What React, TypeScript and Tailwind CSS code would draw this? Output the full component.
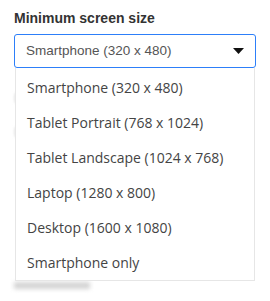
import React from "react";

const items = [
  "Smartphone (320 x 480)",
  "Tablet Portrait (768 x 1024)",
  "Tablet Landscape (1024 x 768)",
  "Laptop (1280 x 800)",
  "Desktop (1600 x 1080)",
  "Smartphone only",
];

export default function App() {
  return (
    <div className="w-[270px] h-[301px] bg-white relative overflow-hidden">
      <div className="pl-[14px] pr-[14px] pt-[10px]">
        <div
          className="text-[14px] leading-[16px] font-bold text-[#333] h-[24px]"
          style={{ fontFamily: "'Liberation Sans', Arial, sans-serif" }}
        >
          Minimum screen size
        </div>
        <div className="relative">
          <div className="h-[34px] border border-[#2d7ff9] rounded-[3px] flex items-center pl-[11px] pr-[11px] justify-between">
            <span
              className="text-[13.5px] text-[#555]"
              style={{ fontFamily: "'Liberation Sans', Arial, sans-serif" }}
            >
              Smartphone (320 x 480)
            </span>
            <svg width="11" height="6" viewBox="0 0 11 6">
              <path d="M0 0 L11 0 L5.5 6 Z" fill="#111" />
            </svg>
          </div>
          <div className="mt-[24px] h-[180px] flex flex-col gap-[22px]">
            <div className="h-[12px] w-[30px] bg-[#e8e8e8] rounded-sm blur-[1px]" />
            <div className="h-[12px] w-[30px] bg-[#e8e8e8] rounded-sm blur-[1px]" />
          </div>
          <div className="mt-[10px] h-[7px] w-[76px] bg-[#d4d4d4] blur-[2px]" />
          <div className="absolute left-[1px] right-[1px] top-[34px] bg-white border-x border-b border-[#e6e6e6] pt-[2px]">
            {items.map((t) => (
              <div
                key={t}
                className="h-[35px] flex items-center pl-[11px] text-[14px] text-[#444]"
                style={{ fontFamily: "'Open Sans', sans-serif" }}
              >
                {t}
              </div>
            ))}
          </div>
        </div>
      </div>
    </div>
  );
}
